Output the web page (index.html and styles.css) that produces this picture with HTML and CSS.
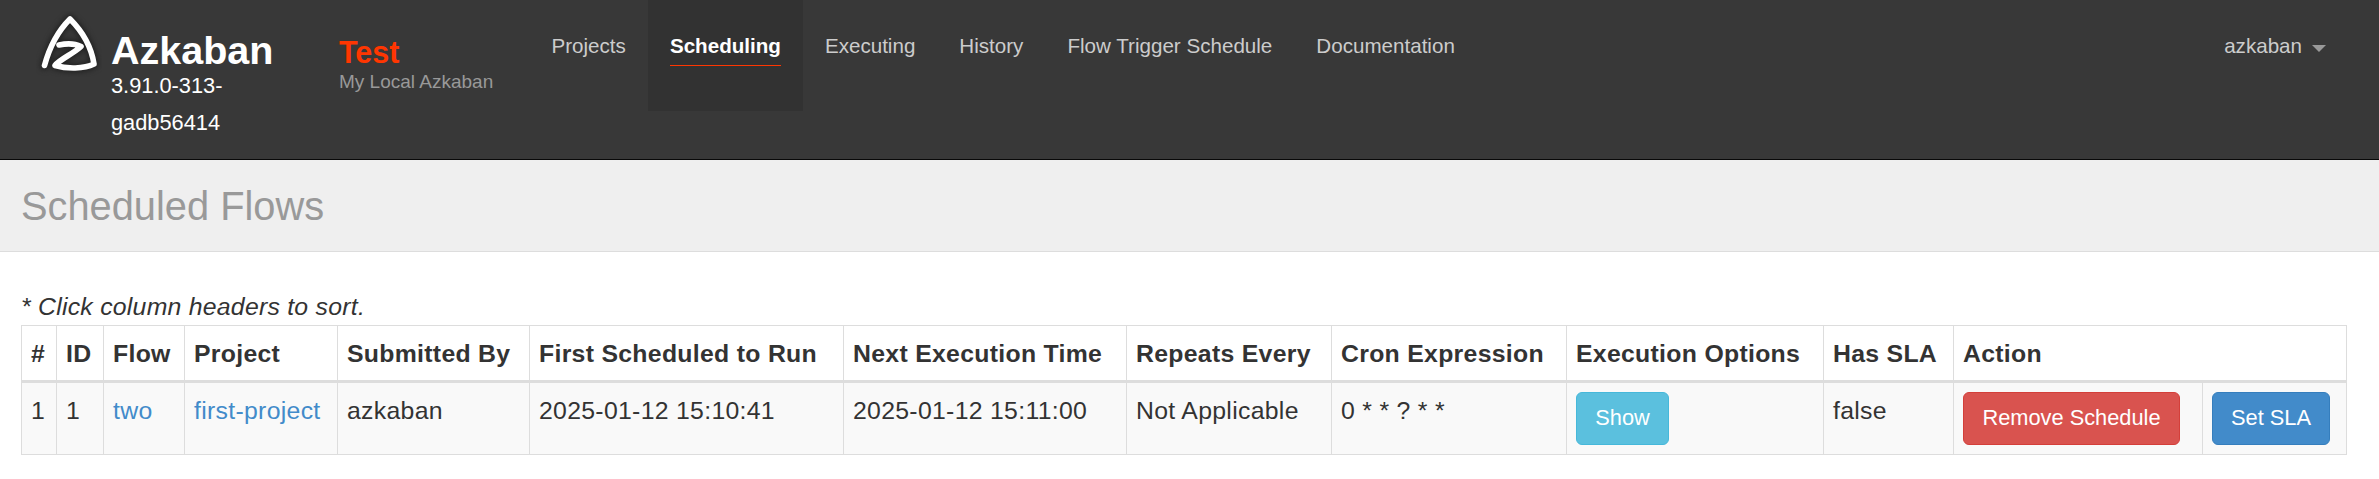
FILE: index.html
```html
<!DOCTYPE html>
<html lang="en">
<head>
<meta charset="utf-8">
<title>Azkaban - Scheduled Flows</title>
<link rel="stylesheet" href="styles.css">
</head>
<body>
<header class="navbar">
  <svg class="logo" viewBox="0 0 66 66" width="66" height="66" aria-hidden="true">
    <path class="logo-glow" d="M8.500 54.500C13 38 22 20 34 8C46 20 55 34 58 53C48 58 31 58 19 54.500C24 48 37 43 45 35.500C39 32.500 30 32.500 23 34"/>
    <path class="logo-line" d="M8.500 54.500C13 38 22 20 34 8C46 20 55 34 58 53C48 58 31 58 19 54.500C24 48 37 43 45 35.500C39 32.500 30 32.500 23 34"/>
  </svg>
  <div class="brand">
    <div class="brand-name">Azkaban</div>
    <div class="brand-version">3.91.0-313-gadb56414</div>
  </div>
  <div class="instance">
    <div class="instance-name">Test</div>
    <div class="instance-label">My Local Azkaban</div>
  </div>
  <nav class="menu">
    <a class="menu-item">Projects</a>
    <a class="menu-item active"><span class="underlined">Scheduling</span></a>
    <a class="menu-item">Executing</a>
    <a class="menu-item">History</a>
    <a class="menu-item">Flow Trigger Schedule</a>
    <a class="menu-item">Documentation</a>
  </nav>
  <div class="user">azkaban<span class="caret"></span></div>
</header>
<div class="page-header"><h1 class="page-title">Scheduled Flows</h1></div>
<main class="content">
  <div class="hint">* Click column headers to sort.</div>
  <table class="flows">
    <colgroup>
      <col class="c-num"><col class="c-id"><col class="c-flow"><col class="c-project"><col class="c-user"><col class="c-first"><col class="c-next"><col class="c-repeat"><col class="c-cron"><col class="c-options"><col class="c-sla"><col class="c-remove"><col class="c-set">
    </colgroup>
    <thead>
      <tr><th>#</th><th>ID</th><th>Flow</th><th>Project</th><th>Submitted By</th><th>First Scheduled to Run</th><th>Next Execution Time</th><th>Repeats Every</th><th>Cron Expression</th><th>Execution Options</th><th>Has SLA</th><th colspan="2">Action</th></tr>
    </thead>
    <tbody>
      <tr><td>1</td><td>1</td><td><a class="link">two</a></td><td><a class="link">first-project</a></td><td>azkaban</td><td>2025-01-12 15:10:41</td><td>2025-01-12 15:11:00</td><td>Not Applicable</td><td>0 * * ? * *</td><td class="btn-cell"><button class="btn info">Show</button></td><td>false</td><td class="btn-cell"><button class="btn danger">Remove Schedule</button></td><td class="btn-cell"><button class="btn primary">Set SLA</button></td></tr>
    </tbody>
  </table>
</main>
</body>
</html>
```
FILE: styles.css
```css
* { box-sizing: border-box; }
body {
  margin: 0;
  background: #fff;
  color: #333;
  font-family: "Liberation Sans", Arial, sans-serif;
  font-size: 24px;
}
.navbar {
  display: flex;
  align-items: flex-start;
  height: 160px;
  padding-left: 36px;
  background: #383838;
  border-bottom: 1px solid #080808;
}
.logo { flex: none; margin-top: 11px; fill: none; stroke-linecap: round; stroke-linejoin: round; }
.logo-glow { stroke: #222; stroke-width: 9; filter: blur(2.5px); }
.logo-line { stroke: #fff; stroke-width: 5.6; filter: blur(0.4px); }
.brand { width: 210px; padding: 28px 0 0 9px; color: #fff; }
.brand-name { font-size: 39.5px; font-weight: bold; line-height: 44px; }
.brand-version { width: 135px; font-size: 21.8px; line-height: 37px; margin-top: -5px; }
.instance { width: 191px; padding: 35px 0 0 27px; white-space: nowrap; }
.instance-name { color: #ff3601; font-size: 30.5px; font-weight: bold; line-height: 34px; }
.instance-label { color: #999; font-size: 19px; line-height: 26px; }
.menu { display: flex; padding-left: 26.5px; }
.menu-item { height: 111px; padding: 34px 22px 0; color: #ccc; font-size: 20.6px; line-height: 24px; white-space: nowrap; }
.menu-item.active { background: #323232; color: #fff; font-weight: bold; }
.underlined { display: block; height: 32px; border-bottom: 1px solid #ff3601; }
.user { display: flex; align-items: flex-start; margin-left: auto; padding: 34px 53px 0 0; color: #ccc; font-size: 20.6px; line-height: 24px; }
.caret { margin: 11px 0 0 10px; border: 7px solid transparent; border-top-color: #999; border-bottom: 0; }
.page-header { height: 92px; padding: 25px 20px 0 21px; background: #efefef; border-bottom: 1px solid #ddd; }
.page-title { margin: 0; color: #999; font-size: 39.8px; font-weight: normal; line-height: 42px; }
.content { padding: 38px 0 0 21px; }
.hint { height: 35px; font-size: 24.8px; font-style: italic; letter-spacing: 0.25px; line-height: 34px; }
.flows { width: 2326px; table-layout: fixed; border-collapse: separate; border-spacing: 0; border-right: 1px solid #ddd; border-top: 1px solid #ddd; font-size: 24.8px; letter-spacing: 0.3px; line-height: 34px; }
.flows th, .flows td { padding: 11px 0 0 9px; border-left: 1px solid #ddd; text-align: left; vertical-align: top; white-space: nowrap; }
.flows th { height: 57px; border-bottom: 3px solid #ddd; }
.flows td { height: 72px; background: #f9f9f9; border-bottom: 1px solid #ddd; }
.flows .btn-cell { padding-top: 9px; }
.c-num { width: 35px; }
.c-id { width: 47px; }
.c-flow { width: 81px; }
.c-project { width: 153px; }
.c-user { width: 192px; }
.c-first { width: 314px; }
.c-next { width: 283px; }
.c-repeat { width: 205px; }
.c-cron { width: 235px; }
.c-options { width: 257px; }
.c-sla { width: 130px; }
.c-remove { width: 249px; }
.c-set { width: 144px; }
.link { color: #428bca; }
.btn { display: block; height: 53px; padding: 0 18px 2px; border: 1px solid; border-radius: 6px; color: #fff; font: 21.8px "Liberation Sans", Arial, sans-serif; white-space: nowrap; }
.info { width: 93px; background: #5bc0de; border-color: #46b8da; }
.danger { width: 217px; background: #d9534f; border-color: #d43f3a; }
.primary { width: 118px; background: #428bca; border-color: #357ebd; }
```
